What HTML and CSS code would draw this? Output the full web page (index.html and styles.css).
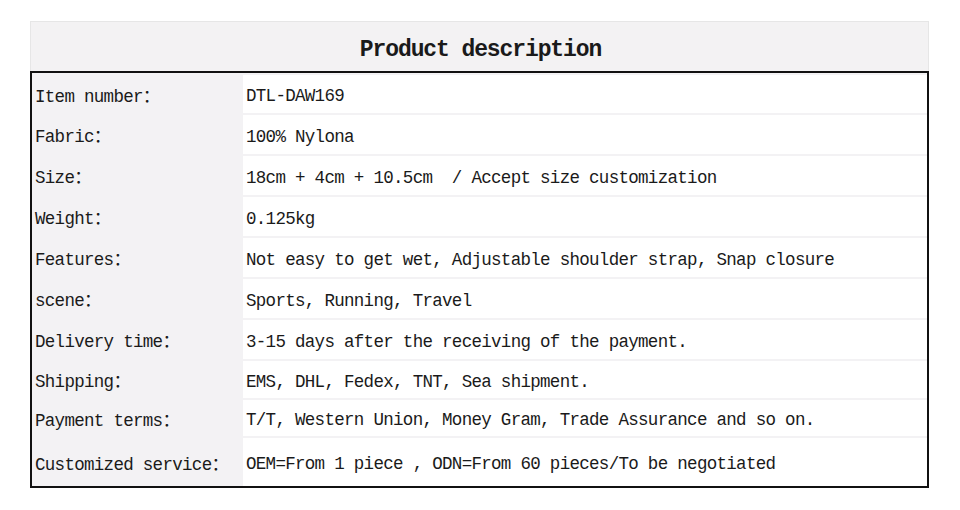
FILE: index.html
```html
<!DOCTYPE html>
<html>
<head>
<meta charset="utf-8">
<link rel="stylesheet" href="styles.css">
</head>
<body>
<div class="sheet">
  <div class="title">Product description</div>
  <div class="specs">
    <div class="row r1"><div class="key">Item number：</div><div class="val">DTL-DAW169</div></div>
    <div class="row"><div class="key">Fabric：</div><div class="val">100% Nylona</div></div>
    <div class="row"><div class="key">Size：</div><div class="val">18cm + 4cm + 10.5cm  / Accept size customization</div></div>
    <div class="row"><div class="key">Weight：</div><div class="val">0.125kg</div></div>
    <div class="row"><div class="key">Features：</div><div class="val">Not easy to get wet, Adjustable shoulder strap, Snap closure</div></div>
    <div class="row"><div class="key">scene：</div><div class="val">Sports, Running, Travel</div></div>
    <div class="row"><div class="key">Delivery time：</div><div class="val">3-15 days after the receiving of the payment.</div></div>
    <div class="row r8"><div class="key">Shipping：</div><div class="val">EMS, DHL, Fedex, TNT, Sea shipment.</div></div>
    <div class="row r9"><div class="key">Payment terms：</div><div class="val">T/T, Western Union, Money Gram, Trade Assurance and so on.</div></div>
    <div class="row r10"><div class="key">Customized service：</div><div class="val">OEM=From 1 piece , ODN=From 60 pieces/To be negotiated</div></div>
  </div>
</div>
</body>
</html>
```
FILE: styles.css
```css
html, body {
  margin: 0;
  padding: 0;
  background: #ffffff;
}
body {
  font-family: "Liberation Mono", "Noto Sans CJK SC", monospace;
  color: #1a1a1a;
}
.sheet {
  margin: 21px 0 0 30px;
  width: 899px;
}
.title {
  box-sizing: border-box;
  height: 50px;
  background: #f3f2f3;
  border: 1px solid #e6e6e6;
  border-bottom: none;
  display: flex;
  align-items: center;
  justify-content: center;
  padding: 7px 0 0 2px;
  font-size: 23px;
  font-weight: bold;
  letter-spacing: -1.1px;
}
.specs {
  border: 2px solid #111111;
  background: #f3f2f4;
  display: flex;
  flex-direction: column;
  gap: 2px;
  padding-top: 2px;
}
.row {
  display: flex;
  height: 39px;
  font-size: 17.5px;
  letter-spacing: -0.7px;
}
.row.r1 { height: 38px; }
.row.r8 { height: 37px; }
.row.r9 { height: 36px; }
.row.r10 { height: 48px; }
.key {
  width: 211px;
  flex: none;
  padding-left: 3px;
  box-sizing: border-box;
  display: flex;
  align-items: center;
  white-space: nowrap;
}
.val {
  flex: 1;
  background: #ffffff;
  padding: 4px 0 0 3px;
  display: flex;
  align-items: center;
  white-space: pre;
}
```
